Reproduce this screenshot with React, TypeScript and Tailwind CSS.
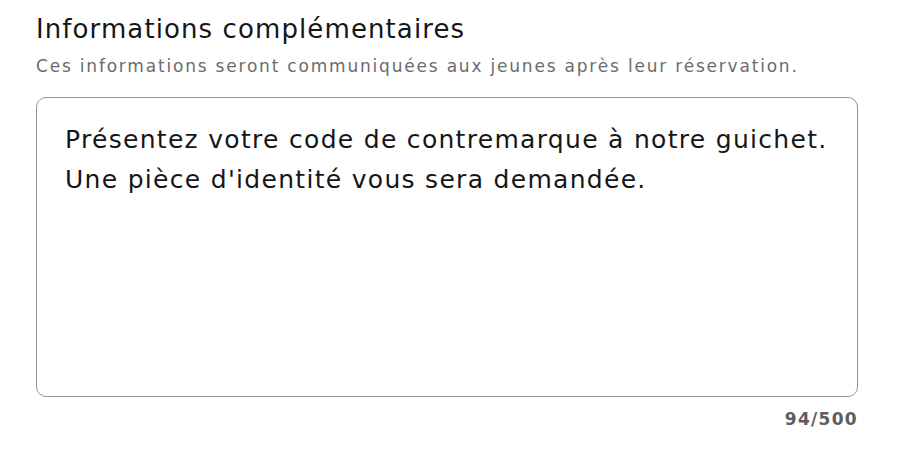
import { useState } from 'react'

export default function App() {
  const [text, setText] = useState(
    "Présentez votre code de contremarque à notre guichet.\nUne pièce d'identité vous sera demandée."
  )

  return (
    <div className="min-h-screen bg-white pt-[13px] px-[36px] font-['DejaVu_Sans',sans-serif]">
      <div className="w-[822px]">
        <label htmlFor="infos" className="block text-[26px] leading-[32px] tracking-[1.1px] text-[#161617]">
          Informations complémentaires
        </label>
        <p className="mt-[11px] text-[17px] leading-[20px] tracking-[1.8px] text-[#6b6b70]">
          Ces informations seront communiquées aux jeunes après leur réservation.
        </p>
        <textarea
          id="infos"
          value={text}
          maxLength={500}
          onChange={(e) => setText(e.target.value)}
          className="mt-[21px] block h-[300px] w-full resize-none rounded-[10px] border-[1.5px] border-[#90949c] px-[28px] pt-[22px] pb-[20px] text-[25px] leading-[40px] tracking-[1.3px] text-[#161617] outline-none"
        />
        <div className="mt-[12px] text-right text-[17px] font-semibold leading-[20px] tracking-[1.3px] text-[#5c5c61]">
          {text.length}/500
        </div>
      </div>
    </div>
  )
}
